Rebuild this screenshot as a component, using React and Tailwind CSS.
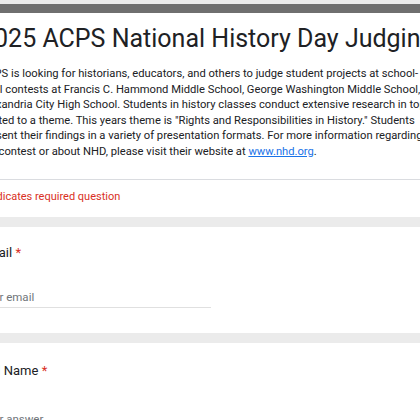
const DESCRIPTION = [
  "ACPS is looking for historians, educators, and others to judge student projects at school-",
  "level contests at Francis C. Hammond Middle School, George Washington Middle School, and",
  "Alexandria City High School. Students in history classes conduct extensive research in topics",
  'related to a theme. This years theme is "Rights and Responsibilities in History." Students',
  "present their findings in a variety of presentation formats. For more information regarding",
];

function Question({ label, placeholder, topPad, gap }) {
  return (
    <div className={`bg-white rounded-lg px-6 pb-[25px] ${topPad}`}>
      <div className="text-[13px] leading-[20px] text-[#202124]">
        {label} <span className="text-[#d93025]">*</span>
      </div>
      <div
        className={`${gap} w-[231px] border-b border-[#e0e0e0] pb-[2px] text-[11.5px] leading-[16px] text-[#70757a]`}
      >
        {placeholder}
      </div>
    </div>
  );
}

export default function App() {
  return (
    <div
      className="w-[420px] h-[420px] overflow-hidden bg-[#ebebeb]"
      style={{ fontFamily: "Roboto, 'Liberation Sans', sans-serif" }}
    >
      <div className="ml-[-44px] w-[560px] pt-[4px] flex flex-col gap-[10px]">
        {/* header card */}
        <div className="bg-white rounded-lg overflow-hidden">
          <div className="h-[9px] bg-[#6f6f6f]" />
          <div className="px-6 pt-[10px] pb-[20px]">
            <h1 className="text-[25px] leading-[32px] text-[#202124] whitespace-nowrap">
              2025 ACPS National History Day Judging
            </h1>
            <div className="mt-[11px] text-[11.2px] leading-[15.5px] text-[#202124] whitespace-nowrap">
              {DESCRIPTION.map((line) => (
                <div key={line}>{line}</div>
              ))}
              <div>
                the contest or about NHD, please visit their website at{" "}
                <a href="#" className="text-[#1a73e8] underline">
                  www.nhd.org
                </a>
                .
              </div>
            </div>
          </div>
          <div className="border-t border-[#dadce0] px-6 pt-[9px] pb-[12px] text-[11px] leading-[16px] text-[#d93025]">
            * Indicates required question
          </div>
        </div>

        <Question label="Email" placeholder="Your email" topPad="pt-[16px]" gap="mt-[26px]" />
        <Question label="Full Name" placeholder="Your answer" topPad="pt-[18px]" gap="mt-[30px]" />
      </div>
    </div>
  );
}
